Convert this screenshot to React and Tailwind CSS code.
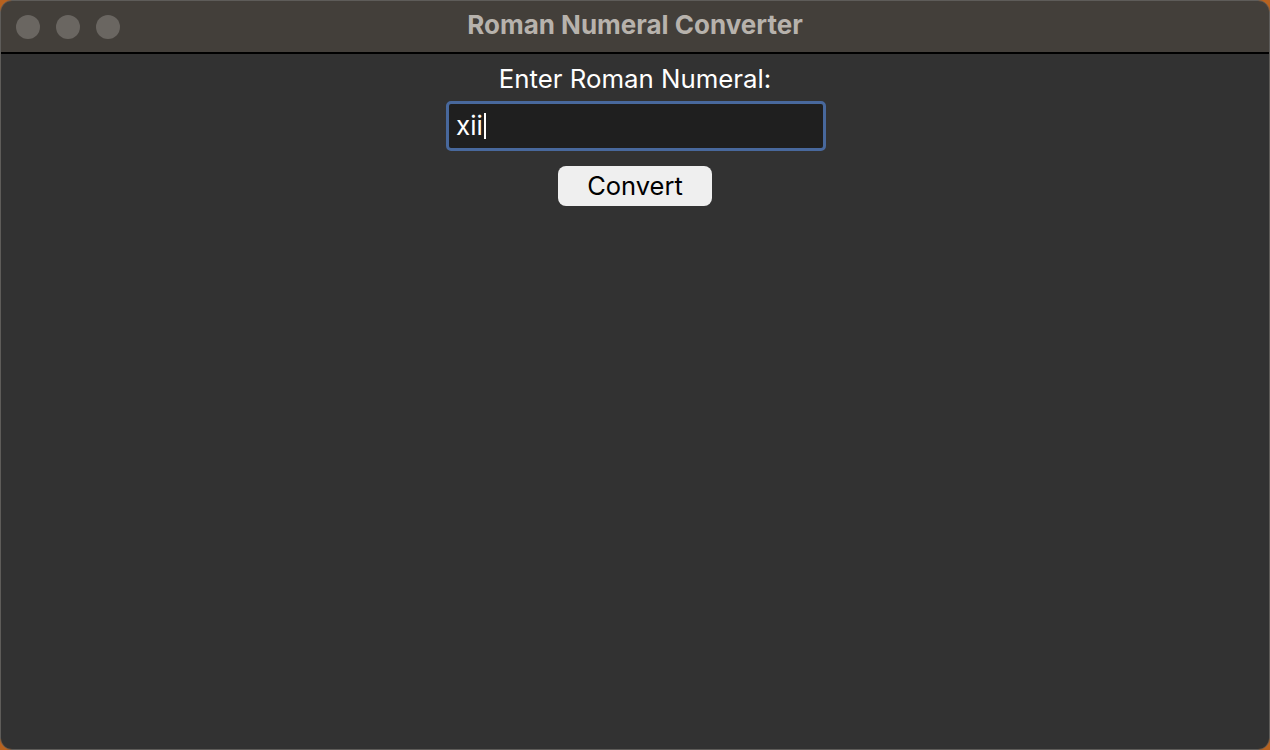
export default function App() {
  return (
    <div className="w-[1270px] h-[750px] bg-[#b8621f]" style={{ fontFamily: "Inter, 'Noto Sans', sans-serif" }}>
      <div className="w-full h-full rounded-[12px] overflow-hidden flex flex-col border border-[#5e5c59]">
        <div className="h-[53px] shrink-0 bg-[#433f3a] border-b-2 border-black flex items-center relative">
          <div className="flex gap-[16px] pl-[15px]">
            <div className="w-[24px] h-[24px] rounded-full bg-[#6a6661]" />
            <div className="w-[24px] h-[24px] rounded-full bg-[#6a6661]" />
            <div className="w-[24px] h-[24px] rounded-full bg-[#6a6661]" />
          </div>
          <div className="absolute inset-0 flex items-center justify-center text-[26px] font-bold text-[#b7b2ac] pb-[4px]">
            Roman Numeral Converter
          </div>
        </div>
        <div className="flex-1 bg-[#323232] flex flex-col items-center pt-[10px]">
          <div className="text-[25.8px] leading-[30px] text-white">Enter Roman Numeral:</div>
          <div className="mt-[7px] w-[380px] h-[50px] border-[3px] border-[#48689c] rounded-[5px] bg-[#1f1f1f] flex items-center pl-[7px] ml-[2px]">
            <span className="text-[26px] text-white leading-none">xii</span>
            <span className="w-[2px] h-[26px] bg-white ml-[1px]" />
          </div>
          <button className="mt-[15px] w-[154px] h-[40px] rounded-[8px] bg-[#efefef] text-black text-[25.5px] leading-none">
            Convert
          </button>
        </div>
      </div>
    </div>
  );
}
